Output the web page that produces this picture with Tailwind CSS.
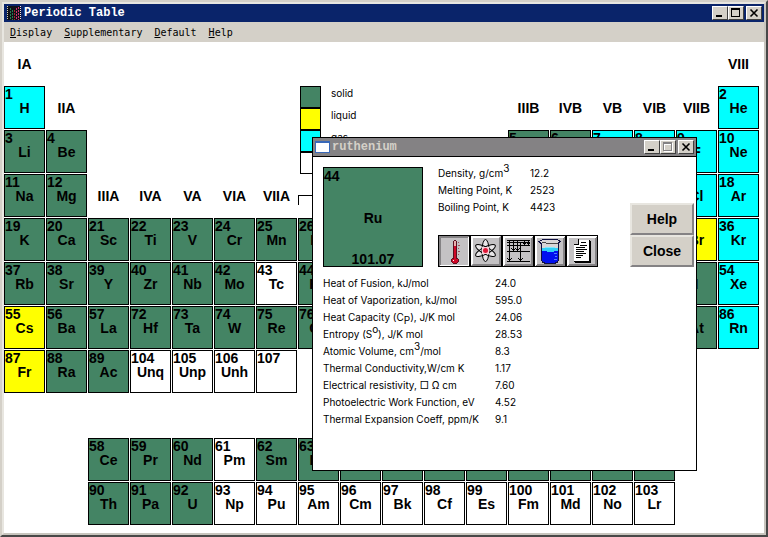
<!DOCTYPE html>
<html lang="en">
  <head>
    <meta charset="utf-8" />
    <meta name="viewport" content="width=device-width, initial-scale=1" />
    <title>Periodic Table</title>
    <script src="https://cdn.jsdelivr.net/npm/@tailwindcss/browser@4"></script>
  </head>
  <body
    class="flex flex-col min-h-screen bg-white border-2 border-t-[#d4d0c8] border-l-[#d4d0c8] border-r-[#484848] border-b-[#484848] font-['Liberation_Sans',Arial,sans-serif] text-black"
  >
    <!-- Main window -->
    <div
      class="relative grow flex flex-col bg-white border-2 border-t-[#e8e6e0] border-l-[#e8e6e0] border-r-[#c8c5be] border-b-[#c8c5be]"
    >
      <!-- Title bar -->
      <header class="flex items-center h-[18px] pl-[3px] pr-0.5 bg-[#0a246a]">
        <svg class="w-3.5 h-3.5" viewBox="0 0 14 14" shape-rendering="crispEdges">
          <rect width="14" height="14" fill="#101018" />
          <path d="M.5 0v14" stroke="#d8d0b0" stroke-dasharray="1 1" />
          <path d="M3.5 2v12M5.5 4v10" stroke="#208050" stroke-dasharray="2 1" />
          <path d="M7.5 4v10" stroke="#a02828" stroke-dasharray="2 1" />
          <path d="M9.5 2v12M11.5 1v13" stroke="#d03070" stroke-dasharray="2 1" />
          <path d="M13.5 0v14" stroke="#f0e0f0" stroke-dasharray="1 1" />
        </svg>
        <h1
          class="grow ml-[3px] font-['Liberation_Mono',monospace] text-xs leading-4 font-bold text-white"
        >
          Periodic Table
        </h1>
        <div class="flex">
          <button
            aria-label="Minimize"
            class="w-4 h-3.5 bg-[#d4d0c8] border border-t-white border-l-white border-r-[#404040] border-b-[#404040]"
          >
            <svg class="w-3.5 h-3" viewBox="0 0 14 12" shape-rendering="crispEdges">
              <path d="M3 8h6v2H3z" />
            </svg>
          </button>
          <button
            aria-label="Maximize"
            class="w-4 h-3.5 bg-[#d4d0c8] border border-t-white border-l-white border-r-[#404040] border-b-[#404040]"
          >
            <svg class="w-3.5 h-3" viewBox="0 0 14 12" shape-rendering="crispEdges">
              <path fill-rule="evenodd" d="M2 1h9v9H2zM3 3v6h7V3z" />
            </svg>
          </button>
          <button
            aria-label="Close window"
            class="ml-0.5 w-4 h-3.5 bg-[#d4d0c8] border border-t-white border-l-white border-r-[#404040] border-b-[#404040]"
          >
            <svg class="w-3.5 h-3" viewBox="0 0 14 12">
              <path d="M3.5 2.5l7 7M10.5 2.5l-7 7" stroke="#000" stroke-width="1.6" />
            </svg>
          </button>
        </div>
      </header>

      <!-- Menu -->
      <nav
        class="flex items-center gap-3 h-5 px-1.5 bg-[#d4d0c8] font-['DejaVu_Sans_Mono',monospace] text-[10px]"
      >
        <a href="#display"><u>D</u>isplay</a>
        <a href="#supplementary"><u>S</u>upplementary</a>
        <a href="#default"><u>D</u>efault</a>
        <a href="#help"><u>H</u>elp</a>
      </nav>

      <!-- Elements -->
      <main
        id="elements"
        class="grid grid-cols-18 auto-rows-[43px] gap-px pr-[5px] pb-2 text-sm leading-none font-bold"
      >
        <!-- Legend -->
        <ul
          class="col-start-8 col-span-3 row-start-2 row-span-2 pl-0.5 font-['Inter',sans-serif] text-[10px] leading-[14px] font-normal"
        >
          <li class="flex gap-2.5 h-[22px]">
            <span class="w-[21px] border border-black bg-[#448464]"></span>solid
          </li>
          <li class="flex gap-2.5 h-[22px]">
            <span class="w-[21px] border border-black bg-[#ffff00]"></span>liquid
          </li>
          <li class="flex gap-2.5 h-[22px]">
            <span class="w-[21px] border border-black bg-[#00ffff]"></span>gas
          </li>
          <li class="flex gap-2.5 h-[22px]">
            <span class="w-[21px] border border-black bg-white"></span>
          </li>
        </ul>

        <!-- Bracket over the three VIIIA columns -->
        <div
          class="col-start-8 col-span-3 row-start-4 self-end mb-3 h-2.5 border border-b-0 border-black"
        ></div>
      </main>

      <!-- Element dialog -->
      <section
        role="dialog"
        aria-labelledby="dialog-title"
        class="absolute left-[308px] top-[133px] w-[385px] bg-white border border-black"
      >
        <header
          class="flex items-center h-[19px] px-0.5 bg-[#848284] border-b border-black"
        >
          <svg class="w-[15px] h-3" viewBox="0 0 15 12" shape-rendering="crispEdges">
            <path d="M0 0h15v12H0z" fill="#3868b8" />
            <path d="M1 2h13v9H1z" fill="#fff" />
          </svg>
          <h2
            id="dialog-title"
            class="grow ml-0.5 font-['Liberation_Mono',monospace] text-xs leading-4 font-bold text-[#d4d0c8]"
          >
            ruthenium
          </h2>
          <div class="flex">
            <button
              aria-label="Minimize"
              class="w-4 h-3.5 bg-[#d4d0c8] border border-t-white border-l-white border-r-[#404040] border-b-[#404040]"
            >
              <svg class="w-3.5 h-3" viewBox="0 0 14 12" shape-rendering="crispEdges">
                <path d="M3 8h6v2H3z" />
              </svg>
            </button>
            <button
              aria-label="Maximize"
              disabled
              class="w-4 h-3.5 bg-[#d4d0c8] border border-t-white border-l-white border-r-[#404040] border-b-[#404040]"
            >
              <svg class="w-3.5 h-3" viewBox="0 0 14 12" shape-rendering="crispEdges">
                <path fill="#fff" fill-rule="evenodd" d="M3 2h9v9H3zM4 4v6h7V4z" />
                <path fill="#848284" fill-rule="evenodd" d="M2 1h9v9H2zM3 3v6h7V3z" />
              </svg>
            </button>
            <button
              aria-label="Close dialog"
              class="ml-0.5 w-4 h-3.5 bg-[#d4d0c8] border border-t-white border-l-white border-r-[#404040] border-b-[#404040]"
            >
              <svg class="w-3.5 h-3" viewBox="0 0 14 12">
                <path d="M3.5 2.5l7 7M10.5 2.5l-7 7" stroke="#000" stroke-width="1.6" />
              </svg>
            </button>
          </div>
        </header>

        <div class="flex pt-2.5 pl-2.5 pr-0.5">
          <!-- Symbol -->
          <div
            class="flex flex-col justify-between w-[100px] h-[100px] pt-px bg-[#448464] border border-black text-sm leading-none font-bold text-center"
          >
            <span class="text-left">44</span>
            <span>Ru</span>
            <span>101.07</span>
          </div>

          <!-- Summary and toolbar -->
          <div class="flex flex-col justify-between ml-[15px] -mt-0.5">
            <table
              class="font-['Inter',sans-serif] text-[10px] leading-[17px] text-left [&_sup]:text-[10px]"
            >
              <tbody>
                <tr>
                  <th class="w-[92px] p-0 font-normal">Density, g/cm<sup>3</sup></th>
                  <td class="p-0">12.2</td>
                </tr>
                <tr>
                  <th class="p-0 font-normal">Melting Point, K</th>
                  <td class="p-0">2523</td>
                </tr>
                <tr>
                  <th class="p-0 font-normal">Boiling Point, K</th>
                  <td class="p-0">4423</td>
                </tr>
              </tbody>
            </table>

            <div class="flex">
              <button aria-label="Thermal properties" class="w-8 h-8">
                <svg viewBox="0 0 32 32" shape-rendering="crispEdges">
                  <path d="M0 0h32v32H0z" />
                  <path d="M1 1h30v30H1z" fill="#c4c2c4" />
                  <path d="M1 31V1h30v2H3v28z" fill="#848284" />
                  <path d="M31 2v29H2v-1h28V2z" fill="#fff" />
                  <path d="M16 5h2v1h1v17h1v1h1v3h-1v1h-1v1h-4v-1h-1v-1h-1v-3h1v-1h1V6h1z" fill="#5a1020" />
                  <path d="M16 6h2v5h-2z" fill="#e8b0b0" />
                  <path d="M16 11h2v13h2v3h-1v1h-4v-1h-1v-3h2z" fill="#d00828" />
                  <path d="M15 25h1v1h-1z" fill="#fff" />
                  <path d="M20 7h1v1h-1zM20 10h2v1h-2zM20 13h1v1h-1zM20 16h2v1h-2zM20 19h1v1h-1z" fill="#a05060" />
                </svg>
              </button>
              <button aria-label="Atomic properties" class="w-8 h-8">
                <svg viewBox="0 0 32 32">
                  <path d="M0 0h32v32H0z" />
                  <path d="M1 1h30v30H1z" fill="#c4c2c4" />
                  <path d="M1 31V1h30l-2 2H3v26z" fill="#fff" />
                  <path d="M31 1v30H1l2-2h26V3z" fill="#848284" />
                  <g fill="#e8e6e8">
                    <ellipse cx="15.500" cy="15.500" rx="3.500" ry="11" />
                    <ellipse cx="15.500" cy="15.500" rx="3.500" ry="11" transform="rotate(62 15.5 15.5)" />
                    <ellipse cx="15.500" cy="15.500" rx="3.500" ry="11" transform="rotate(-62 15.5 15.5)" />
                  </g>
                  <g fill="none" stroke="#000">
                    <ellipse cx="15.500" cy="15.500" rx="3.500" ry="11" />
                    <ellipse cx="15.500" cy="15.500" rx="3.500" ry="11" transform="rotate(62 15.5 15.5)" />
                    <ellipse cx="15.500" cy="15.500" rx="3.500" ry="11" transform="rotate(-62 15.5 15.5)" />
                  </g>
                  <path d="M12 12h7v7h-7z" fill="#f8d0d8" />
                  <circle cx="15.500" cy="15.500" r="2.500" fill="#e01838" />
                </svg>
              </button>
              <button aria-label="Energy levels" class="w-8 h-8">
                <svg viewBox="0 0 32 32" shape-rendering="crispEdges">
                  <path d="M0 0h32v32H0z" />
                  <path d="M1 1h30v30H1z" fill="#c4c2c4" />
                  <path d="M1 31V1h30l-2 2H3v26z" fill="#fff" />
                  <path d="M31 1v30H1l2-2h26V3z" fill="#848284" />
                  <path
                    d="M5 5h23v1H5zM5 7h23v1H5zM5 10h23v1H5zM5 16h23v1H5zM5 26h23v1H5zM7 5h1v21H7zM11 5h1v11h-1zM15 5h1v11h-1zM18 7h1v19h-1zM22 5h1v5h-1zM26 5h1v5h-1z"
                  />
                  <path
                    d="M5 23h1v1H5zM9 23h1v1H9zM6 24h3v1H6zM9 13h1v1H9zM13 13h1v1h-1zM10 14h3v1h-3zM14 14h3v1h-3zM17 13h1v1h-1zM16 23h1v1h-1zM20 23h1v1h-1zM17 24h3v1h-3zM21 8h3v1h-3zM25 8h3v1h-3z"
                  />
                </svg>
              </button>
              <button aria-label="Chemical properties" class="w-8 h-8">
                <svg viewBox="0 0 32 32" shape-rendering="crispEdges">
                  <path d="M0 0h32v32H0z" />
                  <path d="M1 1h30v30H1z" fill="#c4c2c4" />
                  <path d="M1 31V1h30l-2 2H3v26z" fill="#fff" />
                  <path d="M31 1v30H1l2-2h26V3z" fill="#848284" />
                  <path
                    d="M8 4h16v1h2v1h1v1h-1v1h-1v18h-1v2h-2v1H10v-1H8v-2H7V9H6V8H5V7H4V6h2V5h2z"
                    fill="#101040"
                  />
                  <path d="M8 5h16v1h1v1h-1v7H8V8H7V7H6V6h2z" fill="#d8d6d8" />
                  <path d="M8 7h4v1h12v1H12V8H8z" fill="#484848" />
                  <path d="M8 13h16v4H8z" fill="#30d0f8" />
                  <path d="M11 12h10v1H11z" fill="#80e8ff" />
                  <path d="M8 16h5v1h7v-1h4v10h-1v1h-2v1H11v-1H9v-1H8z" fill="#0010f0" />
                  <path d="M20 18h3v1h-3zM21 21h2v1h-2zM20 24h3v1h-3z" fill="#5080ff" />
                </svg>
              </button>
              <button aria-label="Notes" class="w-8 h-8">
                <svg viewBox="0 0 32 32" shape-rendering="crispEdges">
                  <path d="M0 0h32v32H0z" />
                  <path d="M1 1h30v30H1z" fill="#c4c2c4" />
                  <path d="M1 31V1h30l-2 2H3v26z" fill="#fff" />
                  <path d="M31 1v30H1l2-2h26V3z" fill="#848284" />
                  <path d="M12 5h12v1h1v22H9v-1H8V9h4z" />
                  <path d="M12 5h11v21H8V9h4z" fill="#fff" />
                  <path
                    d="M12 4h1v6h-1zM8 9h4v1H8zM15 7h5v1h-5zM14 10h7v1h-7zM10 12h9v1h-9zM10 14h11v1H10zM10 16h8v1h-8zM10 18h10v1H10zM10 20h7v1h-7zM10 22h5v1h-5z"
                  />
                </svg>
              </button>
            </div>
          </div>

          <!-- Actions -->
          <div class="flex flex-col justify-end ml-auto w-16 text-sm leading-none font-bold">
            <button
              class="h-8 bg-[#d4d0c8] border-2 border-t-[#e8e6e0] border-l-[#e8e6e0] border-r-[#848284] border-b-[#848284]"
            >
              Help
            </button>
            <button
              class="h-8 bg-[#d4d0c8] border-2 border-t-[#e8e6e0] border-l-[#e8e6e0] border-r-[#848284] border-b-[#848284]"
            >
              Close
            </button>
          </div>
        </div>

        <!-- Properties -->
        <table
          class="mt-2 ml-2.5 mb-[42px] font-['Inter',sans-serif] text-[10px] leading-[17px] text-left [&_sup]:text-[10px] [&_sub]:text-[10px]"
        >
          <tbody>
            <tr>
              <th class="w-[172px] p-0 font-normal">Heat of Fusion, kJ/mol</th>
              <td class="p-0">24.0</td>
            </tr>
            <tr>
              <th class="p-0 font-normal">Heat of Vaporization, kJ/mol</th>
              <td class="p-0">595.0</td>
            </tr>
            <tr>
              <th class="p-0 font-normal">Heat Capacity (C<sub>P</sub>), J/K mol</th>
              <td class="p-0">24.06</td>
            </tr>
            <tr>
              <th class="p-0 font-normal">Entropy (S<sup>o</sup>), J/K mol</th>
              <td class="p-0">28.53</td>
            </tr>
            <tr>
              <th class="p-0 font-normal">Atomic Volume, cm<sup>3</sup>/mol</th>
              <td class="p-0">8.3</td>
            </tr>
            <tr>
              <th class="p-0 font-normal">Thermal Conductivity,W/cm K</th>
              <td class="p-0">1.17</td>
            </tr>
            <tr>
              <th class="p-0 font-normal">Electrical resistivity, □ Ω cm</th>
              <td class="p-0">7.60</td>
            </tr>
            <tr>
              <th class="p-0 font-normal">Photoelectric Work Function, eV</th>
              <td class="p-0">4.52</td>
            </tr>
            <tr>
              <th class="p-0 font-normal">Thermal Expansion Coeff, ppm/K</th>
              <td class="p-0">9.1</td>
            </tr>
          </tbody>
        </table>
      </section>
    </div>

    <script>
      // [row, first column, first atomic number, symbols]
      const runs = [
        [2, 1, 1, "H"],
        [2, 18, 2, "He"],
        [3, 1, 3, "Li Be"],
        [3, 13, 5, "B C N O F Ne"],
        [4, 1, 11, "Na Mg"],
        [4, 13, 13, "Al Si P S Cl Ar"],
        [5, 1, 19, "K Ca Sc Ti V Cr Mn Fe Co Ni Cu Zn Ga Ge As Se Br Kr"],
        [6, 1, 37, "Rb Sr Y Zr Nb Mo Tc Ru Rh Pd Ag Cd In Sn Sb Te I Xe"],
        [7, 1, 55, "Cs Ba La"],
        [7, 4, 72, "Hf Ta W Re Os Ir Pt Au Hg Tl Pb Bi Po At Rn"],
        [8, 1, 87, "Fr Ra Ac"],
        [8, 4, 104, "Unq Unp Unh"],
        [10, 3, 58, "Ce Pr Nd Pm Sm Eu Gd Tb Dy Ho Er Tm Yb Lu"],
        [11, 3, 90, "Th Pa U Np Pu Am Cm Bk Cf Es Fm Md No Lr"],
      ];

      // [row, first column, labels]
      const groups = [
        [1, 1, "IA"],
        [1, 18, "VIII"],
        [2, 2, "IIA"],
        [2, 13, "IIIB IVB VB VIB VIIB"],
        [4, 3, "IIIA IVA VA VIA VIIA"],
        [4, 11, "IB IIB"],
      ];

      const gas = [1, 2, 7, 8, 9, 10, 17, 18, 36, 54, 86];
      const liquid = [35, 55, 80, 87];
      const table = document.getElementById("elements");

      function fill(n) {
        if (gas.includes(n)) return "bg-[#00ffff]";
        if (liquid.includes(n)) return "bg-[#ffff00]";
        if (n === 43 || n === 61 || n > 92) return "bg-white";
        return "bg-[#448464]";
      }

      function addElement(row, col, n, symbol) {
        const cell = document.createElement("button");
        cell.className = "grid grid-cols-1 grid-rows-1 border border-black " + fill(n);
        cell.style.gridArea = row + " / " + col;
        cell.innerHTML =
          '<span class="col-start-1 row-start-1 place-self-start">' + n + "</span>" +
          '<span class="col-start-1 row-start-1 place-self-center">' + symbol + "</span>";
        table.append(cell);
      }

      for (const [row, col, first, symbols] of runs) {
        symbols.split(" ").forEach((s, i) => addElement(row, col + i, first + i, s));
      }
      addElement(8, 7, 107, "");

      for (const [row, col, labels] of groups) {
        labels.split(" ").forEach((text, i) => {
          const label = document.createElement("span");
          label.className = "place-self-center";
          label.style.gridArea = row + " / " + (col + i);
          label.textContent = text;
          table.append(label);
        });
      }
    </script>
  </body>
</html>
